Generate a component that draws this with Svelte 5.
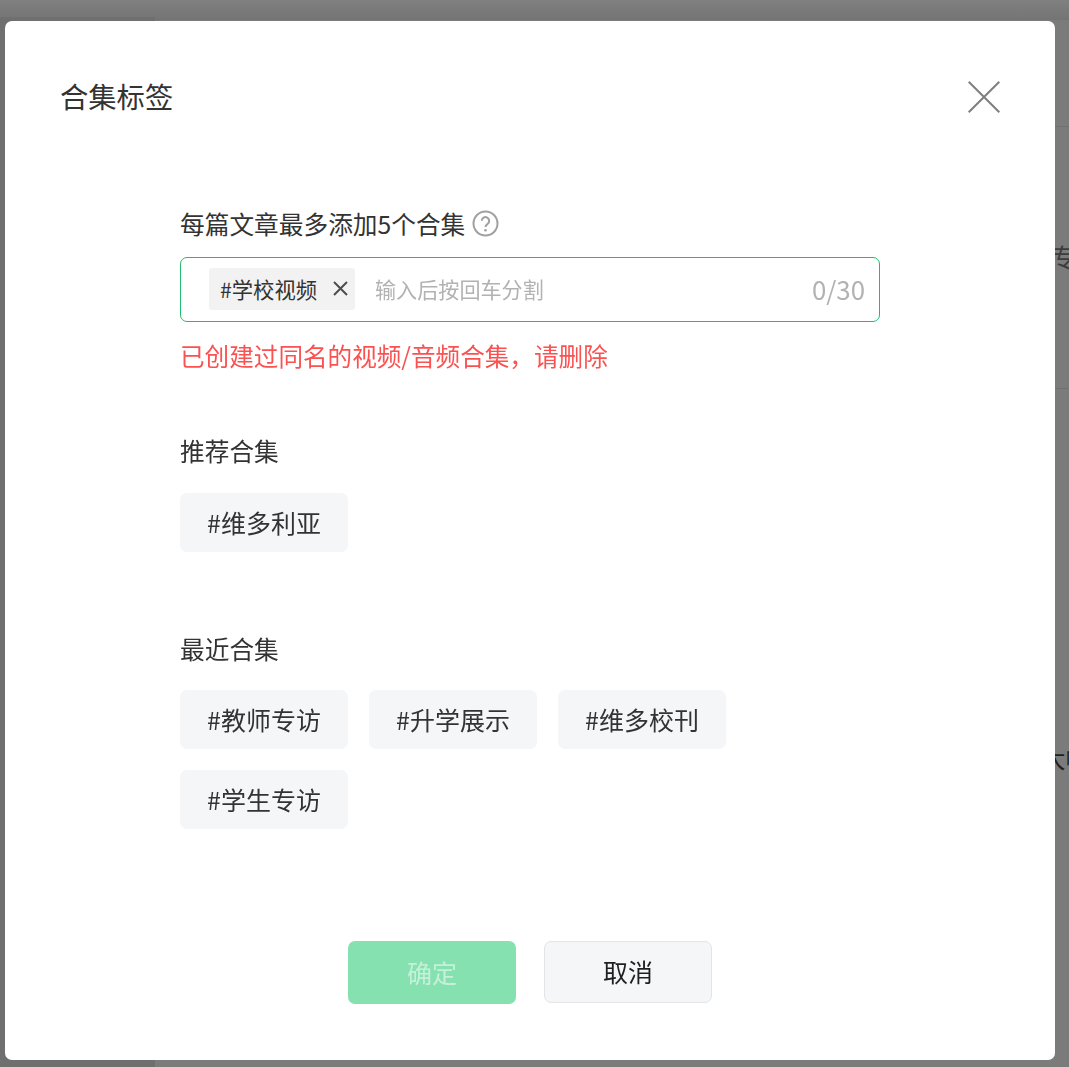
<script>
  let recommended = ['#维多利亚'];
  let recent = ['#教师专访', '#升学展示', '#维多校刊', '#学生专访'];
</script>

<div class="page">
  <div class="topbar"></div>
  <div class="sidebar"></div>
  <div class="backrow r1"></div>
  <div class="backrow r2"><span>专</span></div>
  <div class="backtext">大帧</div>
</div>

<div class="dialog">
  <header>
    <h2>合集标签</h2>
    <button class="close" aria-label="关闭">
      <svg width="32" height="32" viewBox="0 0 32 32"><path d="M.7.7l30.600 30.600M31.300.7L.7 31.300" fill="none" stroke="#7f7f7f" stroke-width="2"/></svg>
    </button>
  </header>

  <div class="body">
    <div class="label">
      每篇文章最多添加5个合集
      <svg class="help" width="27" height="27" viewBox="0 0 27 27">
        <circle cx="13.500" cy="13.500" r="12" fill="none" stroke="#a0a0a0" stroke-width="2"/>
        <path d="M9.800 10.800a3.700 3.700 0 1 1 5.900 3c-1.500 1-2.200 1.700-2.200 3.200" fill="none" stroke="#a0a0a0" stroke-width="2"/>
        <circle cx="13.500" cy="20.300" r="1.300" fill="#a0a0a0"/>
      </svg>
    </div>

    <div class="input">
      <span class="chip">
        #学校视频
        <svg width="15" height="15" viewBox="0 0 15 15"><path d="M1 1l13 13M14 1L1 14" fill="none" stroke="#4d4d4d" stroke-width="2"/></svg>
      </span>
      <span class="placeholder">输入后按回车分割</span>
      <span class="count">0/30</span>
    </div>
    <p class="error">已创建过同名的视频/音频合集，请删除</p>

    <h3 class="first">推荐合集</h3>
    <div class="tags top">
      {#each recommended as tag}
        <span class="tag">{tag}</span>
      {/each}
    </div>

    <h3 class="second">最近合集</h3>
    <div class="tags">
      {#each recent as tag}
        <span class="tag">{tag}</span>
      {/each}
    </div>
  </div>

  <footer>
    <button class="btn primary">确定</button>
    <button class="btn">取消</button>
  </footer>
</div>

<style>
  :global(body) {
    margin: 0;
    font-family: "Noto Sans CJK SC", "Noto Sans", sans-serif;
    overflow: hidden;
  }

  .page {
    position: fixed;
    inset: 0;
    background: #7b7b7b;
    overflow: hidden;
  }

  .topbar {
    position: absolute;
    left: 0;
    right: 0;
    top: 0;
    height: 20px;
    background: linear-gradient(#808080, #747474);
  }

  .sidebar {
    position: absolute;
    left: 0;
    top: 17px;
    bottom: 0;
    width: 155px;
    background: #6f6f6f;
  }

  .backrow {
    position: absolute;
    left: 155px;
    right: 0;
    border-bottom: 1px solid #707070;
    color: #3c3c3c;
    font-size: 24.500px;
  }

  .r1 { top: 126px; }
  .r2 { top: 232px; height: 156px; }
  .r2 span {
    position: absolute;
    left: 896px;
    top: 7px;
  }

  .backtext {
    position: absolute;
    left: 1041px;
    top: 740px;
    color: #1f1f1f;
    font-size: 24.500px;
    white-space: nowrap;
  }

  .dialog {
    position: relative;
    box-sizing: border-box;
    width: 1050px;
    height: 1039px;
    margin: 21px 0 0 5px;
    background: #fff;
    border-radius: 7px;
    display: flex;
    flex-direction: column;
  }

  header {
    display: flex;
    justify-content: space-between;
    align-items: flex-start;
    padding: 55px 55px 0 55px;
  }

  h2 {
    margin: 0;
    font-size: 28.300px;
    line-height: 40px;
    font-weight: 400;
    color: #333;
  }

  .close {
    padding: 0;
    margin-top: 5px;
    width: 32px;
    height: 32px;
    border: 0;
    background: none;
  }

  .close svg { display: block; }

  .body {
    width: 700px;
    margin: 89px 0 0 175px;
    flex: 1;
  }

  .label {
    display: flex;
    align-items: center;
    gap: 7px;
    height: 36px;
    font-size: 24.700px;
    line-height: 34px;
    color: #333;
  }

  .help { margin-top: 1px; }

  .input {
    box-sizing: border-box;
    display: flex;
    align-items: center;
    width: 700px;
    height: 65px;
    margin-top: 16px;
    padding: 0 14px 2px 28px;
    border: 1.500px solid #1fbb6f;
    border-radius: 7px;
  }

  .chip {
    display: flex;
    align-items: center;
    gap: 16px;
    box-sizing: border-box;
    height: 42px;
    padding: 0 7px 0 11px;
    background: #f2f2f2;
    border-radius: 3px;
    font-size: 21.300px;
    color: #333;
  }

  .placeholder {
    margin-left: 20px;
    font-size: 21.100px;
    color: #b2b2b2;
  }

  .count {
    margin-left: auto;
    font-size: 25.800px;
    color: #b2b2b2;
  }

  .error {
    margin: 15px 0 0;
    font-size: 24.600px;
    line-height: 36px;
    color: #fa5151;
  }

  h3 {
    margin: 0;
    font-size: 24.700px;
    line-height: 36px;
    font-weight: 400;
    color: #333;
  }

  .first { margin-top: 59px; }
  .second { margin-top: 78px; }

  .tags {
    display: flex;
    flex-wrap: wrap;
    gap: 21px;
    margin-top: 24px;
  }

  .tags.top { margin-top: 25px; }

  .tag {
    display: flex;
    align-items: center;
    justify-content: center;
    box-sizing: border-box;
    width: 168px;
    height: 59px;
    padding-bottom: 2px;
    background: #f5f6f8;
    border-radius: 7px;
    font-size: 25px;
    color: #333;
  }

  footer {
    display: flex;
    align-items: flex-start;
    justify-content: center;
    gap: 28px;
    height: 119px;
  }

  .btn {
    box-sizing: border-box;
    width: 168px;
    height: 62px;
    padding: 0 0 3px;
    border: 1px solid #e3e4e8;
    border-radius: 7px;
    background: #f5f6f8;
    font-family: inherit;
    font-size: 25px;
    color: #1f1f1f;
  }

  .primary {
    height: 63px;
    padding-bottom: 2px;
    border: 0;
    background: #85e2b0;
    color: #c6f0d9;
  }
</style>
